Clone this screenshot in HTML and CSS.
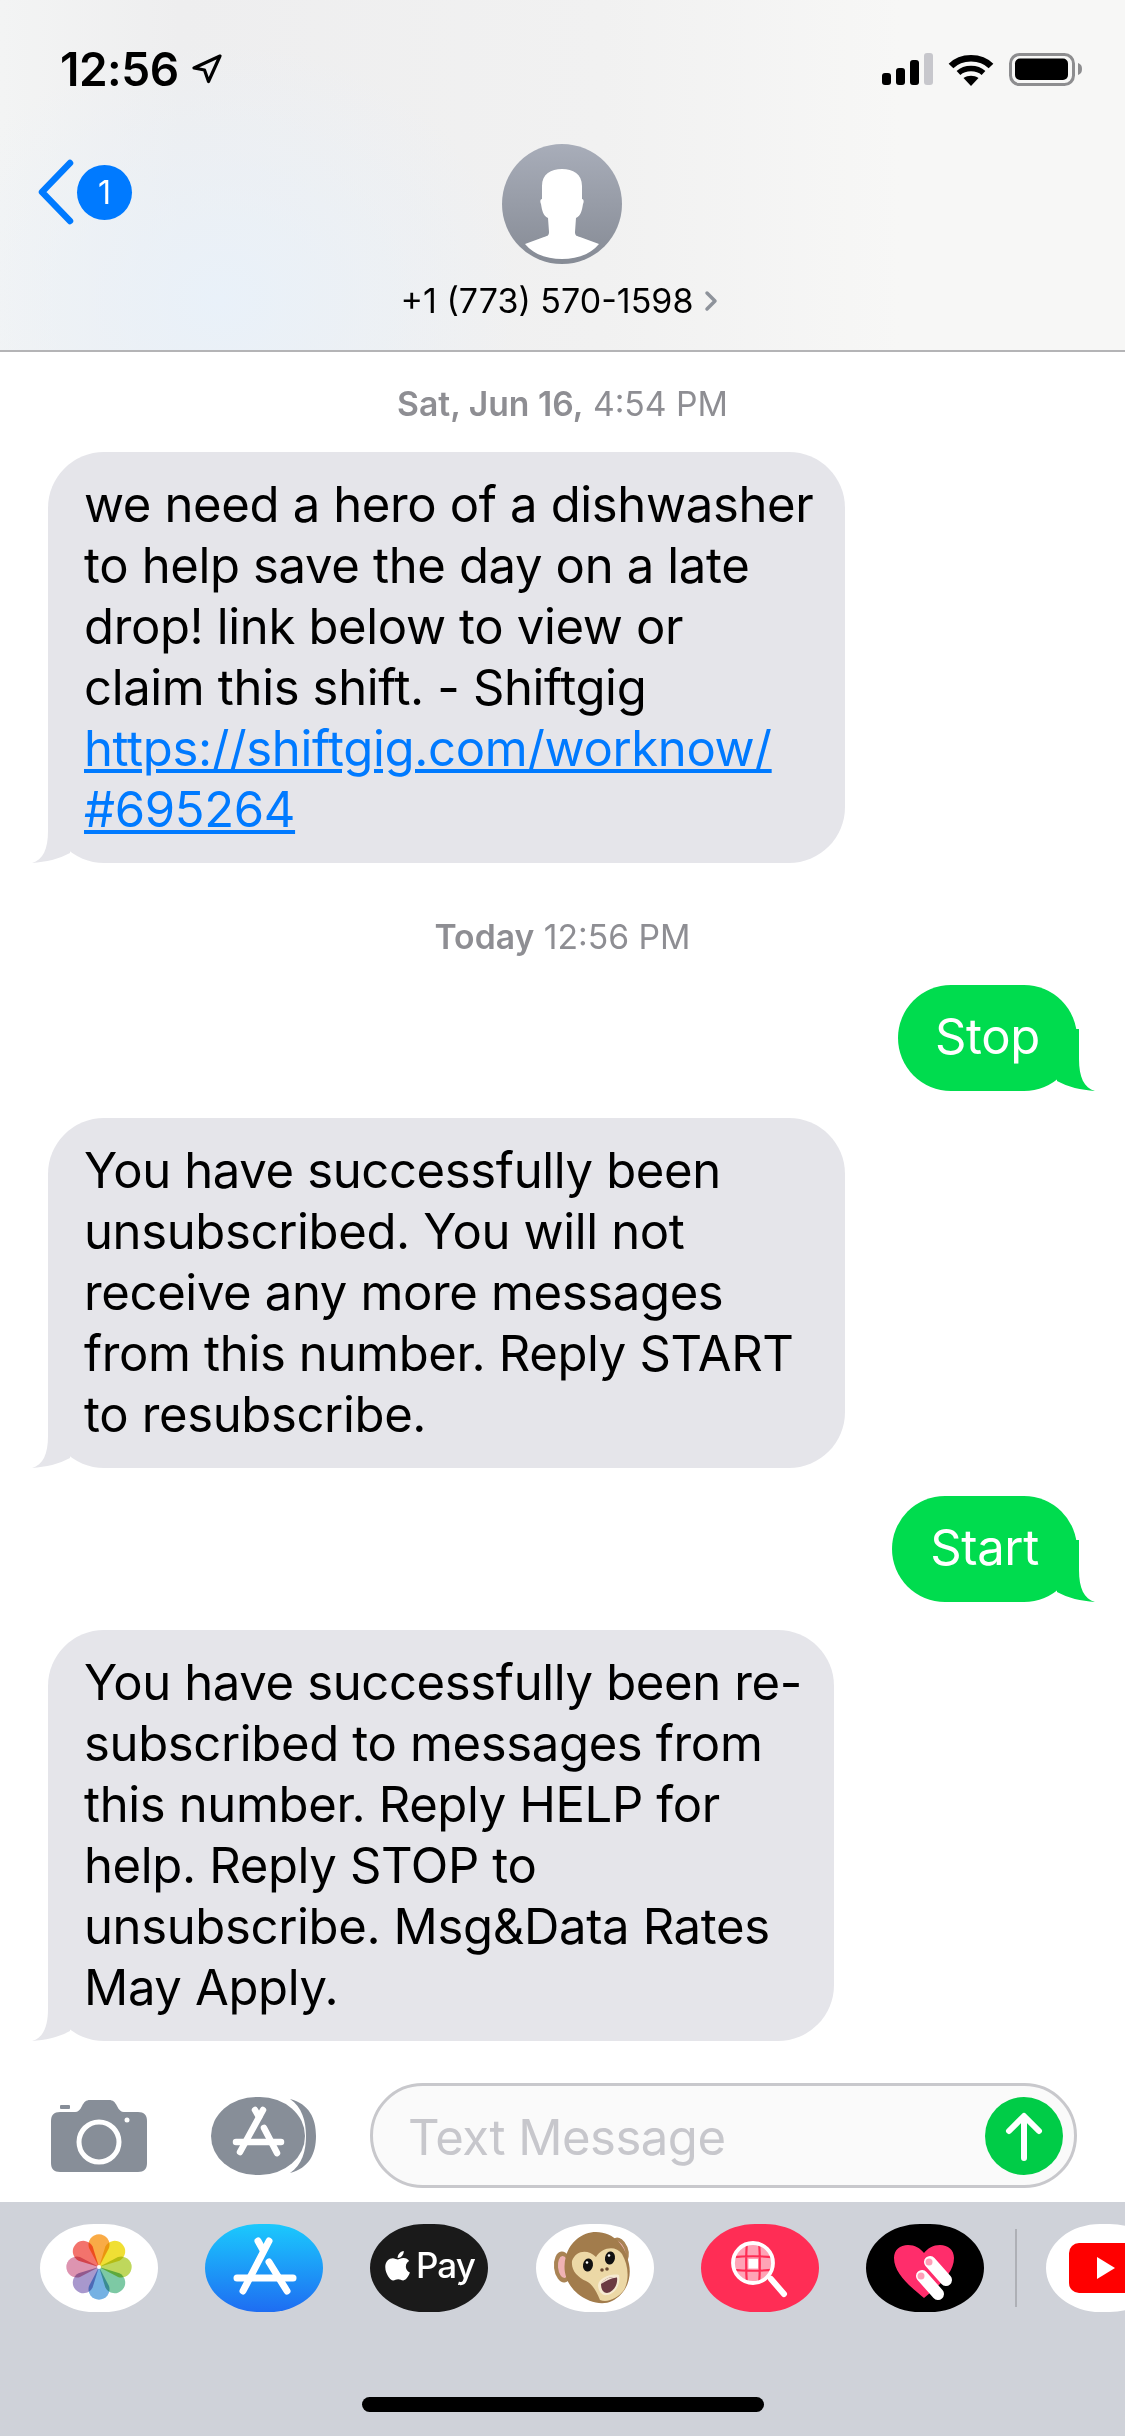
FILE: index.html
```html
<!DOCTYPE html>
<html lang="en">
<head>
    <meta charset="UTF-8">
    <meta name="viewport" content="width=device-width, initial-scale=1.0">
    <title>Messages</title>
    <link rel="stylesheet" href="styles.css">
</head>
<body>
    <!-- Top bar -->
    <header class="top-bar">
        <div class="status-row">
            <div class="clock">
                <span>12:56</span>
                <svg class="location" width="32" height="30" viewBox="0 0 32 30"><path d="M29 2 L3 14 L13.500 16 L17.500 27.500 Z" fill="none" stroke="#000" stroke-width="3.200" stroke-linejoin="round"/></svg>
            </div>
            <div class="status-icons">
                <svg width="54" height="33" viewBox="0 0 54 33">
                    <rect x="2" y="20" width="9" height="12" rx="3"/>
                    <rect x="16" y="15" width="9" height="17" rx="3"/>
                    <rect x="30" y="7" width="9" height="25" rx="3"/>
                    <rect x="44" y="0" width="9" height="32" rx="3" fill="#c7c7cc"/>
                </svg>
                <svg width="47" height="33" viewBox="0 0 47 33">
                    <path d="M3 13 C13 2.500 33 2.500 43 13" fill="none" stroke="#000" stroke-width="6.500"/>
                    <path d="M10.500 20 C17 14 29 14 35.500 20" fill="none" stroke="#000" stroke-width="5.500"/>
                    <path d="M15.500 25 C20 22 26 22 30.500 25 L23 33 Z"/>
                </svg>
                <svg width="74" height="33" viewBox="0 0 74 33">
                    <rect x="1.500" y="1.500" width="63" height="30" rx="9" fill="none" stroke="#8d8d8f" stroke-width="3"/>
                    <rect x="6" y="5.500" width="53" height="21.500" rx="5"/>
                    <path d="M69 10 C72 11 73 13 73 16 C73 19 72 21 69 22 Z" fill="#8d8d8f"/>
                </svg>
            </div>
        </div>
        <div class="nav-row">
            <div class="back">
                <svg width="40" height="66" viewBox="0 0 40 66"><path d="M34 4 L6 33 L34 62" fill="none" stroke="#007aff" stroke-width="6.500" stroke-linecap="round" stroke-linejoin="round"/></svg>
                <span class="back-count">1</span>
            </div>
            <div class="contact">
                <div class="avatar">
                    <svg width="120" height="120" viewBox="0 0 120 120">
                        <path d="M60 25 C71 25 80 30 80 42 L80 55 C82 55 82 58 81 60 C80 66 79 72 74 74 L73 88 C73 92 75 92 78 93 L97 100 C88 111 74 115 60 115 C46 115 32 111 23 100 L42 93 C45 92 47 92 47 88 L46 74 C41 72 40 66 39 60 C38 58 38 55 40 55 L40 42 C40 30 49 25 60 25 Z" fill="#fff"/>
                    </svg>
                </div>
                <div class="contact-name">
                    <span>+1 (773) 570-1598</span>
                    <svg width="14" height="22" viewBox="0 0 14 22"><path d="M3 3 L11 11 L3 19" fill="none" stroke="#8e939b" stroke-width="3.500" stroke-linecap="round" stroke-linejoin="round"/></svg>
                </div>
            </div>
        </div>
    </header>

    <!-- Messages -->
    <main class="thread">
        <div class="stamp"><b>Sat, Jun 16,</b> 4:54 PM</div>
        <div class="bubble in wide">
            we need a hero of a dishwasher<br>to help save the day on a late<br>drop! link below to view or<br>claim this shift. - Shiftgig<br><a href="#">https://shiftgig.com/worknow/<br>#695264</a>
            <svg class="tail" width="50" height="62" viewBox="0 -30 50 62"><path d="M0 32 C11 29 16 18 16 0 V-30 H38 V22 C27 28 14 31 0 32 Z"/></svg>
        </div>
        <div class="stamp stamp-today"><b>Today</b> 12:56 PM</div>
        <div class="bubble out stop">
            Stop
            <svg class="tail" width="50" height="62" viewBox="0 -30 50 62"><path d="M0 32 C11 29 16 18 16 0 V-30 H38 V22 C27 28 14 31 0 32 Z"/></svg>
        </div>
        <div class="bubble in wide">
            You have successfully been<br>unsubscribed. You will not<br>receive any more messages<br>from this number. Reply START<br>to resubscribe.
            <svg class="tail" width="50" height="62" viewBox="0 -30 50 62"><path d="M0 32 C11 29 16 18 16 0 V-30 H38 V22 C27 28 14 31 0 32 Z"/></svg>
        </div>
        <div class="bubble out start">
            Start
            <svg class="tail" width="50" height="62" viewBox="0 -30 50 62"><path d="M0 32 C11 29 16 18 16 0 V-30 H38 V22 C27 28 14 31 0 32 Z"/></svg>
        </div>
        <div class="bubble in narrow">
            You have successfully been re-<br>subscribed to messages from<br>this number. Reply HELP for<br>help. Reply STOP to<br>unsubscribe. Msg&amp;Data Rates<br>May Apply.
            <svg class="tail" width="50" height="62" viewBox="0 -30 50 62"><path d="M0 32 C11 29 16 18 16 0 V-30 H38 V22 C27 28 14 31 0 32 Z"/></svg>
        </div>
    </main>

    <!-- Input bar -->
    <div class="compose">
        <svg class="camera" width="96" height="72" viewBox="0 0 96 72">
            <path d="M9 12 H24 C27 12 29 10 31 6 C33 2 35 0 39 0 H58 C62 0 64 2 66 6 C68 10 70 12 73 12 H87 C93 12 96 15 96 21 V63 C96 69 93 72 87 72 H9 C3 72 0 69 0 63 V21 C0 15 3 12 9 12 Z" fill="#878e98"/>
            <rect x="9" y="5" width="10" height="4" rx="1" fill="#878e98"/>
            <circle cx="48" cy="42" r="20" fill="none" stroke="#fff" stroke-width="5"/>
            <circle cx="76" cy="20" r="2.500" fill="#fff"/>
        </svg>
        <svg class="store-button" width="106" height="80" viewBox="0 0 106 80">
            <rect x="0" y="1" width="94" height="78" rx="45" ry="39" fill="#878e98"/>
            <path d="M79 3 C98 8 105 22 105 40 C105 58 98 72 79 77 C91 69 95 55 95 40 C95 25 91 11 79 3 Z" fill="#878e98"/>
            <g fill="none" stroke="#fff" stroke-width="6.500" stroke-linecap="round">
                <path d="M52 14 L29 56"/>
                <path d="M44 14 L48 21"/>
                <path d="M53 32 L66 57"/>
                <path d="M25 46 H70"/>
            </g>
        </svg>
        <div class="input">
            <span class="placeholder">Text Message</span>
            <div class="send">
                <svg width="78" height="78" viewBox="0 0 78 78"><path d="M39 61 V20 M24 34 L39 19 L54 34" fill="none" stroke="#fff" stroke-width="6" stroke-linecap="round" stroke-linejoin="round"/></svg>
            </div>
        </div>
    </div>

    <!-- App tray -->
    <footer class="tray">
        <div class="apps">
            <div class="app app-white">
                <svg width="118" height="88" viewBox="0 0 118 88">
                    <g transform="translate(59 43)" class="petals">
                        <path fill="#f9a232" d="M0 0 L-10 -19 A10.500 10.500 0 1 1 10 -19 Z"/>
                        <path fill="#efdc1e" transform="rotate(45)" d="M0 0 L-10 -19 A10.500 10.500 0 1 1 10 -19 Z"/>
                        <path fill="#b8d34a" transform="rotate(90)" d="M0 0 L-10 -19 A10.500 10.500 0 1 1 10 -19 Z"/>
                        <path fill="#6fc39a" transform="rotate(135)" d="M0 0 L-10 -19 A10.500 10.500 0 1 1 10 -19 Z"/>
                        <path fill="#66a9e0" transform="rotate(180)" d="M0 0 L-10 -19 A10.500 10.500 0 1 1 10 -19 Z"/>
                        <path fill="#9f8dc8" transform="rotate(225)" d="M0 0 L-10 -19 A10.500 10.500 0 1 1 10 -19 Z"/>
                        <path fill="#da88a8" transform="rotate(270)" d="M0 0 L-10 -19 A10.500 10.500 0 1 1 10 -19 Z"/>
                        <path fill="#f2645c" transform="rotate(315)" d="M0 0 L-10 -19 A10.500 10.500 0 1 1 10 -19 Z"/>
                    </g>
                    <circle cx="59" cy="43" r="2" fill="#fff"/>
                </svg>
            </div>
            <div class="app app-store">
                <svg width="118" height="88" viewBox="0 0 118 88">
                    <g fill="none" stroke="#fff" stroke-width="7" stroke-linecap="round">
                        <path d="M64 17 L38 67"/>
                        <path d="M53 17 L58 26"/>
                        <path d="M64 38 L82 67"/>
                        <path d="M32 54 H88"/>
                    </g>
                </svg>
            </div>
            <div class="app app-pay">
                <svg width="118" height="88" viewBox="0 0 118 88">
                    <g transform="translate(15 25) scale(0.0655)"><path fill="#fff" d="M318.7 268.7c-.2-36.7 16.4-64.4 50-84.8-18.8-26.9-47.2-41.7-84.7-44.6-35.5-2.8-74.3 20.7-88.500 20.7-15 0-49.400-19.700-76.400-19.700C63.300 141.200 4 184.800 4 273.500q0 39.300 14.400 81.200c12.800 36.700 59 126.700 107.200 125.200 25.200-.6 43-17.900 75.800-17.900 31.800 0 48.300 17.900 76.400 17.900 48.600-.7 90.400-82.500 102.600-119.300-65.200-30.700-61.700-90-61.700-91.900zm-56.600-164.200c27.300-32.400 24.800-61.900 24-72.500-24.100 1.400-52 16.400-67.900 34.900-17.500 19.800-27.800 44.300-25.600 71.900 26.100 2 49.900-11.400 69.500-34.300z"/></g>
                    <text x="46" y="54" class="pay-text">Pay</text>
                </svg>
            </div>
            <div class="app app-white">
                <svg width="118" height="88" viewBox="0 0 118 88">
                    <ellipse cx="27" cy="43" rx="9" ry="15.500" fill="#a98354" transform="rotate(-6 27 43)"/>
                    <ellipse cx="27.500" cy="43" rx="5.500" ry="11" fill="#efb2b4" transform="rotate(-6 27.500 43)"/>
                    <ellipse cx="84" cy="26" rx="8" ry="13" fill="#a98354" transform="rotate(-22 84 26)"/>
                    <ellipse cx="84" cy="26" rx="4.500" ry="9" fill="#efb2b4" transform="rotate(-22 84 26)"/>
                    <path d="M60 8 C78 8 90 22 93 40 C96 55 90 70 76 77 C66 82 52 78 42 70 C30 60 26 46 30 32 C34 18 46 8 60 8 Z" fill="#a27c4c"/>
                    <path d="M36 37 C40 26 52 25 60 33 C66 23 80 21 86 30 C92 40 94 55 88 66 C82 74 72 79 64 76 C60 66 56 60 50 57 C42 53 35 47 36 37 Z" fill="#ecd8a6"/>
                    <ellipse cx="52" cy="41" rx="5" ry="6.500" fill="#111" transform="rotate(10 52 41)"/>
                    <ellipse cx="74" cy="34" rx="5" ry="6.500" fill="#111" transform="rotate(10 74 34)"/>
                    <circle cx="51" cy="38.500" r="1.300" fill="#fff"/>
                    <circle cx="73" cy="31.500" r="1.300" fill="#fff"/>
                    <circle cx="66" cy="46" r="1.800" fill="#6b4a30"/>
                    <circle cx="71" cy="45" r="1.800" fill="#6b4a30"/>
                    <path d="M62 61 C63 54 75 49 83 51 C85 59 80 70 71 71 C66 72 62 67 62 61 Z" fill="#f6ead0"/>
                    <path d="M65 60 C68 55 75 52 81 53.500 C82 60 78 68 71 69 C67 69 65 65 65 60 Z" fill="#6b3a42"/>
                    <path d="M65 60 C68 55 75 52 81 53.500 C75 54 70 57 65 60 Z" fill="#f3e2d4"/>
                </svg>
            </div>
            <div class="app app-grid">
                <svg width="118" height="88" viewBox="0 0 118 88">
                    <defs><clipPath id="lens"><circle cx="52" cy="39" r="20.500"/></clipPath></defs>
                    <g clip-path="url(#lens)">
                        <circle cx="52" cy="39" r="22" fill="#ffa3b6"/>
                        <path d="M30 22 C42 19 62 19 74 22 M30 33.500 C42 32 62 32 74 33.500 M30 45.500 C42 47 62 47 74 45.500 M30 57 C42 59 62 59 74 57 M35 16 C32 30 32 48 35 62 M46 16 C45 30 45 48 46 62 M58 16 C59 30 59 48 58 62 M69 16 C72 30 72 48 69 62" fill="none" stroke="#ff2d55" stroke-width="2.200"/>
                        <rect x="47.500" y="35" width="9.500" height="9.500" fill="#fff"/>
                    </g>
                    <circle cx="52" cy="39" r="20" fill="none" stroke="#fff" stroke-width="3.800"/>
                    <path d="M70 55 L83 70" fill="none" stroke="#fff" stroke-width="6" stroke-linecap="round"/>
                </svg>
            </div>
            <div class="app app-black">
                <svg width="118" height="88" viewBox="0 0 118 88">
                    <path d="M58 74 C46 64 28 50 28 34 C28 26 34 21 42 21 C49 21 54 24 58 29 C62 24 67 21 74 21 C82 21 88 26 88 34 C88 50 70 64 58 74 Z" fill="#ff2d6b"/>
                    <path d="M64 38 L80 56" fill="none" stroke="#fff" stroke-width="12" stroke-linecap="round"/>
                    <path d="M56 52 L72 70" fill="none" stroke="#fff" stroke-width="12" stroke-linecap="round"/>
                    <circle cx="63" cy="38" r="3.500" fill="#ff9fb8"/>
                    <circle cx="55" cy="52" r="3.500" fill="#ff9fb8"/>
                </svg>
            </div>
            <div class="divider"></div>
            <div class="app app-white app-last">
                <svg width="118" height="88" viewBox="0 0 118 88">
                    <rect x="23" y="19" width="130" height="50" rx="10" fill="#f00"/>
                    <path d="M51 33 L69 44 L51 55 Z" fill="#fff"/>
                </svg>
            </div>
        </div>
        <div class="home-bar"></div>
    </footer>
</body>
</html>
```

FILE: styles.css
```css
* {
    box-sizing: border-box;
}
html, body {
    margin: 0;
    padding: 0;
}
body {
    width: 1125px;
    height: 2436px;
    overflow: hidden;
    background: #fff;
    color: #000;
    font-family: Inter, "Liberation Sans", sans-serif;
    display: flex;
    flex-direction: column;
}

/* top bar */
.top-bar {
    height: 352px;
    flex: none;
    border-bottom: 2px solid #b4b4b6;
    background:
        radial-gradient(ellipse 300px 260px at 220px 300px, #e9f1f9 0%, rgba(233, 241, 249, 0) 100%),
        linear-gradient(90deg, #f3f4f4 0, #eeeeef 180px, #f1f1f1 600px, #f7f7f6 900px);
}
.status-row {
    height: 141px;
    padding: 46px 42px 0 60px;
    display: flex;
    justify-content: space-between;
    align-items: flex-start;
}
.clock {
    display: flex;
    align-items: center;
    gap: 12px;
    font-size: 46px;
    font-weight: 600;
    line-height: 46px;
    letter-spacing: -0.5px;
}
.location {
    margin-top: -1px;
}
.status-icons {
    display: flex;
    align-items: center;
    gap: 14px;
    margin-top: 7px;
}
.nav-row {
    display: flex;
    position: relative;
    justify-content: center;
}
.back {
    position: absolute;
    left: 36px;
    top: 18px;
    display: flex;
    align-items: center;
    gap: 0;
}
.back-count {
    width: 55px;
    height: 55px;
    margin-left: 1px;
    border-radius: 50%;
    background: #007aff;
    color: #fff;
    font-size: 32px;
    line-height: 55px;
    text-align: center;
}
.contact {
    margin-top: 3px;
    display: flex;
    flex-direction: column;
    align-items: center;
}
.avatar {
    width: 120px;
    height: 120px;
    border-radius: 50%;
    overflow: hidden;
    background: linear-gradient(#a8adb9, #868b95);
}
.avatar svg {
    display: block;
}
.contact-name {
    display: flex;
    align-items: center;
    gap: 11px;
    margin-top: 17px;
    padding-right: 6px;
    font-size: 34px;
    line-height: 40px;
}

/* messages */
.thread {
    flex: none;
    height: 1711px;
    display: flex;
    flex-direction: column;
    align-items: flex-start;
    padding: 32px 48px 0;
}
.stamp {
    width: 100%;
    height: 40px;
    margin-bottom: 28px;
    color: #8e8e93;
    font-size: 33.700px;
    line-height: 40px;
    text-align: center;
}
.stamp b {
    font-weight: 600;
}
.stamp-today {
    margin-top: 54px;
}
.bubble {
    position: relative;
    padding: 22px 36px 23px;
    border-radius: 56px;
    font-size: 49px;
    line-height: 61px;
    letter-spacing: -0.35px;
    white-space: nowrap;
}
.bubble a {
    color: #007aff;
}
.in {
    background: #e5e5ea;
}
.out {
    background: #00dc4e;
    color: #fff;
    align-self: flex-end;
    height: 106px;
    padding: 21px 0 0;
    text-align: center;
    margin-bottom: 27px;
}
.wide {
    width: 797px;
}
.narrow {
    width: 786px;
}
.stop {
    width: 179px;
}
.start {
    width: 185px;
    margin-top: 28px;
    margin-bottom: 28px;
}
.tail {
    position: absolute;
    bottom: 0;
    left: -16px;
    fill: #e5e5ea;
}
.out .tail {
    left: auto;
    right: -18px;
    fill: #00dc4e;
    transform: scaleX(-1);
}

/* input bar */
.compose {
    flex: none;
    height: 139px;
    padding-left: 51px;
    display: flex;
    align-items: center;
    position: relative;
}
.camera {
    flex: none;
    margin-top: 6px;
}
.store-button {
    flex: none;
    margin-left: 64px;
    margin-top: 6px;
}
.input {
    flex: none;
    width: 707px;
    height: 105px;
    margin-left: 53px;
    margin-top: 6px;
    padding: 0 11px 0 35px;
    border: 3px solid #c8c8cc;
    border-radius: 53px;
    background: #fafafa;
    display: flex;
    align-items: center;
    justify-content: space-between;
}
.placeholder {
    color: #c7c7cc;
    font-size: 49px;
    letter-spacing: -0.5px;
    padding-top: 3px;
}
.send {
    width: 78px;
    height: 78px;
    border-radius: 50%;
    background: #00cc47;
}
.send svg {
    display: block;
}

/* app tray */
.tray {
    flex: 1;
    background: #cfd2d9;
    display: flex;
    flex-direction: column;
    padding-top: 22px;
    position: relative;
}
.apps {
    display: flex;
    align-items: center;
    gap: 47.200px;
    padding-left: 40px;
    width: 1125px;
    overflow: hidden;
}
.app {
    flex: none;
    width: 118px;
    height: 88px;
    border-radius: 46% / 50%;
    overflow: hidden;
}
.app svg {
    display: block;
}
.app-white {
    background: #fff;
}
.app-store {
    background: linear-gradient(#1bc9fd, #1e6df2);
}
.app-pay {
    background: #1a1a1a;
}
.app-grid {
    background: #ff2d55;
}
.app-black {
    background: #000;
}
.app-last {
    margin-left: -18px;
}
.divider {
    flex: none;
    width: 2px;
    height: 78px;
    margin-left: -16px;
    background: #aeb0b6;
}
.petals path {
    mix-blend-mode: multiply;
    opacity: 0.9;
}
.pay-text {
    fill: #fff;
    font-family: Inter, sans-serif;
    font-size: 35px;
    font-weight: 500;
    letter-spacing: -1px;
}
.home-bar {
    width: 402px;
    height: 15px;
    margin: 85px auto 0;
    border-radius: 8px;
    background: #000;
}
```
